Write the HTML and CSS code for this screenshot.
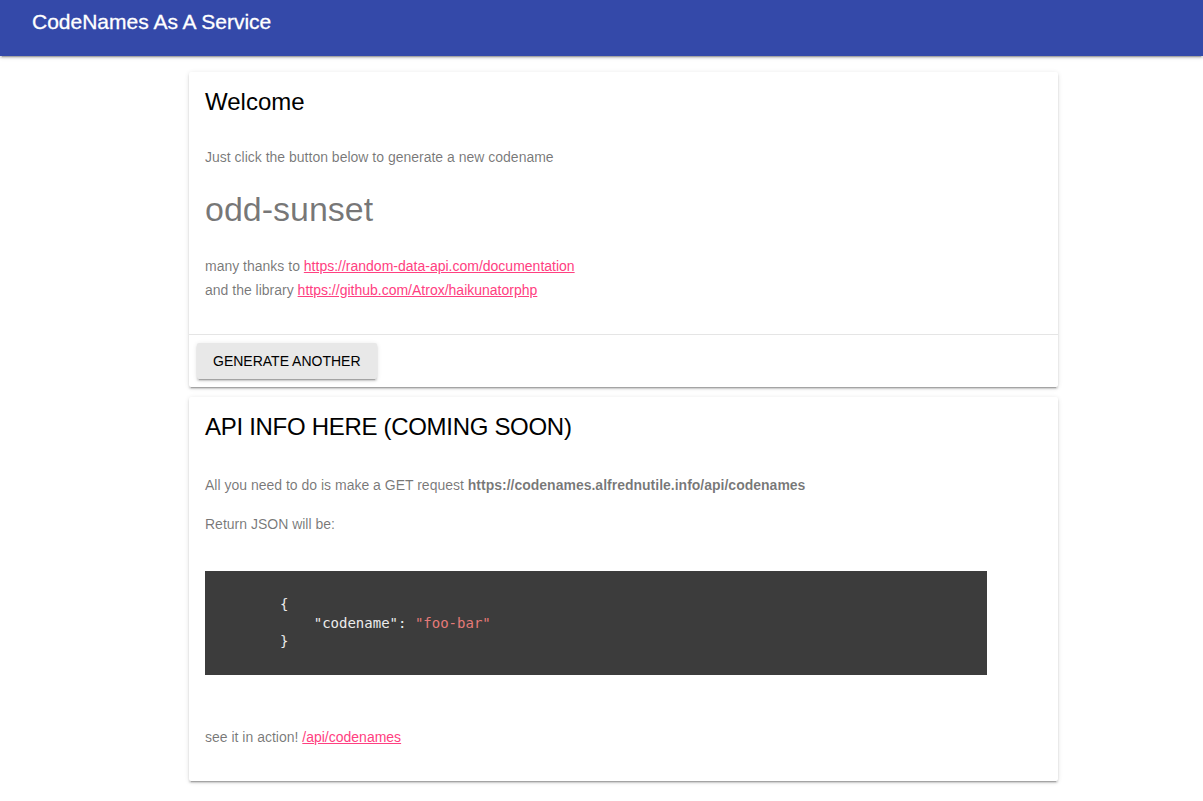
FILE: index.html
```html
<!DOCTYPE html>
<html lang="en">
<head>
<meta charset="utf-8">
<title>CodeNames As A Service</title>
<link rel="stylesheet" href="styles.css">
</head>
<body>
<header class="app-header">
  <span class="app-title">CodeNames As A Service</span>
</header>
<main class="page">
  <section class="card">
    <div class="card-title"><h2 class="card-title-text">Welcome</h2></div>
    <div class="card-text">
      <p class="lead">Just click the button below to generate a new codename</p>
      <h4 class="codename">odd-sunset</h4>
      <p class="thanks">many thanks to <a href="#">https://random-data-api.com/documentation</a><br>and the library <a href="#">https://github.com/Atrox/haikunatorphp</a></p>
    </div>
    <div class="card-actions">
      <button class="raised-btn" type="button">Generate Another</button>
    </div>
  </section>
  <section class="card">
    <div class="card-title"><h2 class="card-title-text tight">API INFO HERE (COMING SOON)</h2></div>
    <div class="card-text">
      <p class="p-first">All you need to do is make a GET request <strong>https://codenames.alfrednutile.info/api/codenames</strong></p>
      <p class="p-second">Return JSON will be:</p>
      <pre class="code">{
    <span class="key">"codename"</span>: <span class="str">"foo-bar"</span>
}</pre>
      <p class="p-last">see it in action! <a href="#">/api/codenames</a></p>
    </div>
  </section>
</main>
</body>
</html>
```
FILE: styles.css
```css
* { box-sizing: border-box; }
html, body { margin: 0; padding: 0; }
body {
  background: #fff;
  font-family: "Liberation Sans", Arial, Helvetica, sans-serif;
  color: rgba(0,0,0,0.87);
}
.app-header {
  height: 56px;
  background: #3449a9;
  color: #fff;
  padding: 10px 32px 0;
  box-shadow: 0 2px 2px 0 rgba(0,0,0,.14), 0 3px 1px -2px rgba(0,0,0,.2), 0 1px 5px 0 rgba(0,0,0,.12);
  position: relative;
  z-index: 2;
}
.app-title {
  font-size: 21px;
  line-height: 24px;
  font-weight: 400;
  -webkit-text-stroke: 0.3px #fff;
  display: block;
}
.page {
  padding: 16px 0 20px 189px;
}
.card {
  width: 869px;
  background: #fff;
  border-radius: 2px;
  box-shadow: 0 2px 2px 0 rgba(0,0,0,.14), 0 3px 1px -2px rgba(0,0,0,.2), 0 1px 5px 0 rgba(0,0,0,.12);
  margin-bottom: 10px;
}
.card-title {
  padding: 16px;
}
.card-title-text {
  margin: 0;
  font-size: 24px;
  line-height: 28px;
  font-weight: 300;
  color: #000;
}
.card-title-text.tight { letter-spacing: -0.3px; }
.card-text {
  padding: 16px;
  font-size: 14px;
  color: rgba(0,0,0,.54);
}
.card-text p { margin: 0; }
.lead { line-height: 18px; }
.codename {
  margin: 23px 0 0;
  font-size: 34px;
  line-height: 40px;
  font-weight: 400;
}
.thanks {
  margin-top: 25px !important;
  line-height: 24px;
  margin-bottom: 16px !important;
}
.card-text a { color: #ff4081; }
.p-first { line-height: 24px; margin-bottom: 15px !important; }
.p-second { line-height: 24px; }
.p-first strong { font-weight: bold; }
.code {
  margin: 35px 0 0;
  width: 782px;
  background: #3c3c3c;
  color: #ececec;
  font-family: "DejaVu Sans Mono", "Liberation Mono", monospace;
  font-size: 14px;
  line-height: 18.5px;
  padding: 24px 0 24px 75px;
}
.code .str { color: #e57a78; }
.p-last {
  margin-top: 50px !important;
  margin-bottom: 16px !important;
  line-height: 24px;
}
.card-actions {
  border-top: 1px solid rgba(0,0,0,.1);
  padding: 8px;
}
.raised-btn {
  height: 36px;
  padding: 0 16px;
  border: none;
  border-radius: 2px;
  background: #e8e8e8;
  color: #000;
  font-family: "Liberation Sans", Arial, sans-serif;
  font-size: 14px;
  font-weight: 500;
  text-transform: uppercase;
  box-shadow: 0 2px 2px 0 rgba(0,0,0,.14), 0 3px 1px -2px rgba(0,0,0,.2), 0 1px 5px 0 rgba(0,0,0,.12);
  cursor: pointer;
}
```
